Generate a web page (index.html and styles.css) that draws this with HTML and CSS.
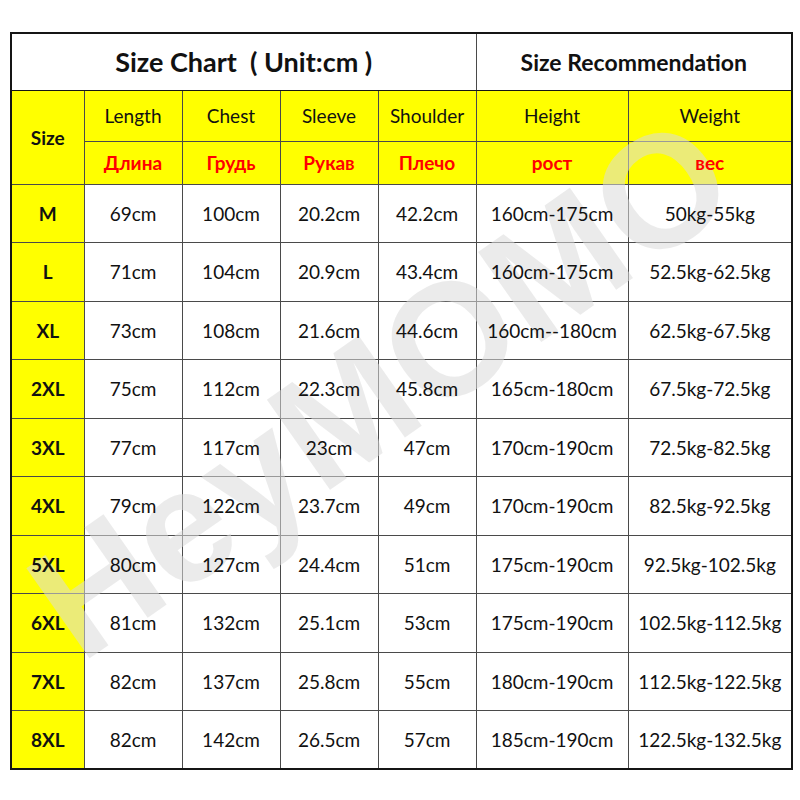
FILE: index.html
```html
<!DOCTYPE html>
<html>
<head>
<meta charset="utf-8">
<link rel="stylesheet" href="styles.css">
</head>
<body>
<div class="chart">
  <table class="sizes">
    <colgroup>
      <col class="c-size"><col class="c-len"><col class="c-chest"><col class="c-sleeve"><col class="c-shoulder"><col class="c-height"><col class="c-weight">
    </colgroup>
    <tr class="r-title">
      <th colspan="5" class="title"><span class="t">Size Chart &nbsp;( Unit:cm )</span></th>
      <th colspan="2" class="title small"><span class="t">Size Recommendation</span></th>
    </tr>
    <tr class="r-en">
      <th rowspan="2" class="hd size-hd"><span class="t">Size</span></th>
      <th class="hd"><span class="t">Length</span></th><th class="hd"><span class="t">Chest</span></th><th class="hd"><span class="t">Sleeve</span></th><th class="hd"><span class="t">Shoulder</span></th><th class="hd"><span class="t">Height</span></th><th class="hd"><span class="t">Weight</span></th>
    </tr>
    <tr class="r-ru">
      <th class="hd ru"><span class="t">Длина</span></th><th class="hd ru"><span class="t">Грудь</span></th><th class="hd ru"><span class="t">Рукав</span></th><th class="hd ru"><span class="t">Плечо</span></th><th class="hd ru"><span class="t">рост</span></th><th class="hd ru"><span class="t">вес</span></th>
    </tr>
    <tr><th class="sz"><span class="t">M</span></th><td><span class="t">69cm</span></td><td><span class="t">100cm</span></td><td><span class="t">20.2cm</span></td><td><span class="t">42.2cm</span></td><td><span class="t">160cm-175cm</span></td><td><span class="t">50kg-55kg</span></td></tr>
    <tr><th class="sz"><span class="t">L</span></th><td><span class="t">71cm</span></td><td><span class="t">104cm</span></td><td><span class="t">20.9cm</span></td><td><span class="t">43.4cm</span></td><td><span class="t">160cm-175cm</span></td><td><span class="t">52.5kg-62.5kg</span></td></tr>
    <tr><th class="sz"><span class="t">XL</span></th><td><span class="t">73cm</span></td><td><span class="t">108cm</span></td><td><span class="t">21.6cm</span></td><td><span class="t">44.6cm</span></td><td><span class="t">160cm--180cm</span></td><td><span class="t">62.5kg-67.5kg</span></td></tr>
    <tr><th class="sz"><span class="t">2XL</span></th><td><span class="t">75cm</span></td><td><span class="t">112cm</span></td><td><span class="t">22.3cm</span></td><td><span class="t">45.8cm</span></td><td><span class="t">165cm-180cm</span></td><td><span class="t">67.5kg-72.5kg</span></td></tr>
    <tr><th class="sz"><span class="t">3XL</span></th><td><span class="t">77cm</span></td><td><span class="t">117cm</span></td><td><span class="t">23cm</span></td><td><span class="t">47cm</span></td><td><span class="t">170cm-190cm</span></td><td><span class="t">72.5kg-82.5kg</span></td></tr>
    <tr><th class="sz"><span class="t">4XL</span></th><td><span class="t">79cm</span></td><td><span class="t">122cm</span></td><td><span class="t">23.7cm</span></td><td><span class="t">49cm</span></td><td><span class="t">170cm-190cm</span></td><td><span class="t">82.5kg-92.5kg</span></td></tr>
    <tr><th class="sz"><span class="t">5XL</span></th><td><span class="t">80cm</span></td><td><span class="t">127cm</span></td><td><span class="t">24.4cm</span></td><td><span class="t">51cm</span></td><td><span class="t">175cm-190cm</span></td><td><span class="t">92.5kg-102.5kg</span></td></tr>
    <tr><th class="sz"><span class="t">6XL</span></th><td><span class="t">81cm</span></td><td><span class="t">132cm</span></td><td><span class="t">25.1cm</span></td><td><span class="t">53cm</span></td><td><span class="t">175cm-190cm</span></td><td><span class="t">102.5kg-112.5kg</span></td></tr>
    <tr><th class="sz"><span class="t">7XL</span></th><td><span class="t">82cm</span></td><td><span class="t">137cm</span></td><td><span class="t">25.8cm</span></td><td><span class="t">55cm</span></td><td><span class="t">180cm-190cm</span></td><td><span class="t">112.5kg-122.5kg</span></td></tr>
    <tr><th class="sz"><span class="t">8XL</span></th><td><span class="t">82cm</span></td><td><span class="t">142cm</span></td><td><span class="t">26.5cm</span></td><td><span class="t">57cm</span></td><td><span class="t">185cm-190cm</span></td><td><span class="t">122.5kg-132.5kg</span></td></tr>
  </table>
  <div class="watermark">HeyMOMO</div>
</div>
</body>
</html>
```

FILE: styles.css
```css
html, body {
  margin: 0;
  padding: 0;
  background: #ffffff;
}

body {
  width: 800px;
  height: 800px;
  overflow: hidden;
  font-family: "Lato", "Open Sans", sans-serif;
  color: #111111;
}

.chart {
  position: relative;
  z-index: 0;
  margin: 32px 0 0 10px;
  width: 781px;
}

/* sits over the cell fills, under the cell text */
.watermark {
  position: absolute;
  left: calc(50% + 12px);
  top: calc(50% - 12px);
  z-index: 1;
  transform: translate(-54%, -51%) rotate(-35deg);
  font-family: "Liberation Sans", Arial, sans-serif;
  font-weight: bold;
  font-size: 160px;
  line-height: 1;
  color: rgba(218, 218, 218, 0.55);
  white-space: nowrap;
  pointer-events: none;
}

.t {
  position: relative;
  z-index: 2;
}

.sizes {
  width: 781px;
  table-layout: fixed;
  border-collapse: collapse;
  border: 2px solid #151515;
  background: #ffffff;
}

.c-size { width: 73px; }
.c-len { width: 98px; }
.c-chest { width: 98px; }
.c-sleeve { width: 98px; }
.c-shoulder { width: 98px; }
.c-height { width: 152px; }
.c-weight { width: 164px; }

.sizes th,
.sizes td {
  border: 1px solid #4a4a4a;
  padding: 0;
  text-align: center;
  vertical-align: middle;
  font-size: 19px;
  font-weight: 400;
  white-space: nowrap;
}

.sizes tr { height: 58.5px; }
.sizes tr.r-title { height: 57px; }
.sizes tr.r-en { height: 51px; }
.sizes tr.r-ru { height: 43px; }

.sizes .title {
  background: #ffffff;
  font-size: 27px;
  font-weight: 700;
  border-bottom: 1.5px solid #151515;
  border-left: 1.5px solid #151515;
}

.sizes .title.small {
  font-size: 23px;
}

.sizes .hd {
  background: #ffff00;
}

.sizes .hd.ru {
  color: #ff0000;
  font-weight: 700;
}

.sizes .size-hd {
  font-weight: 700;
}

.sizes .sz {
  background: #ffff00;
  font-weight: 700;
}
```
